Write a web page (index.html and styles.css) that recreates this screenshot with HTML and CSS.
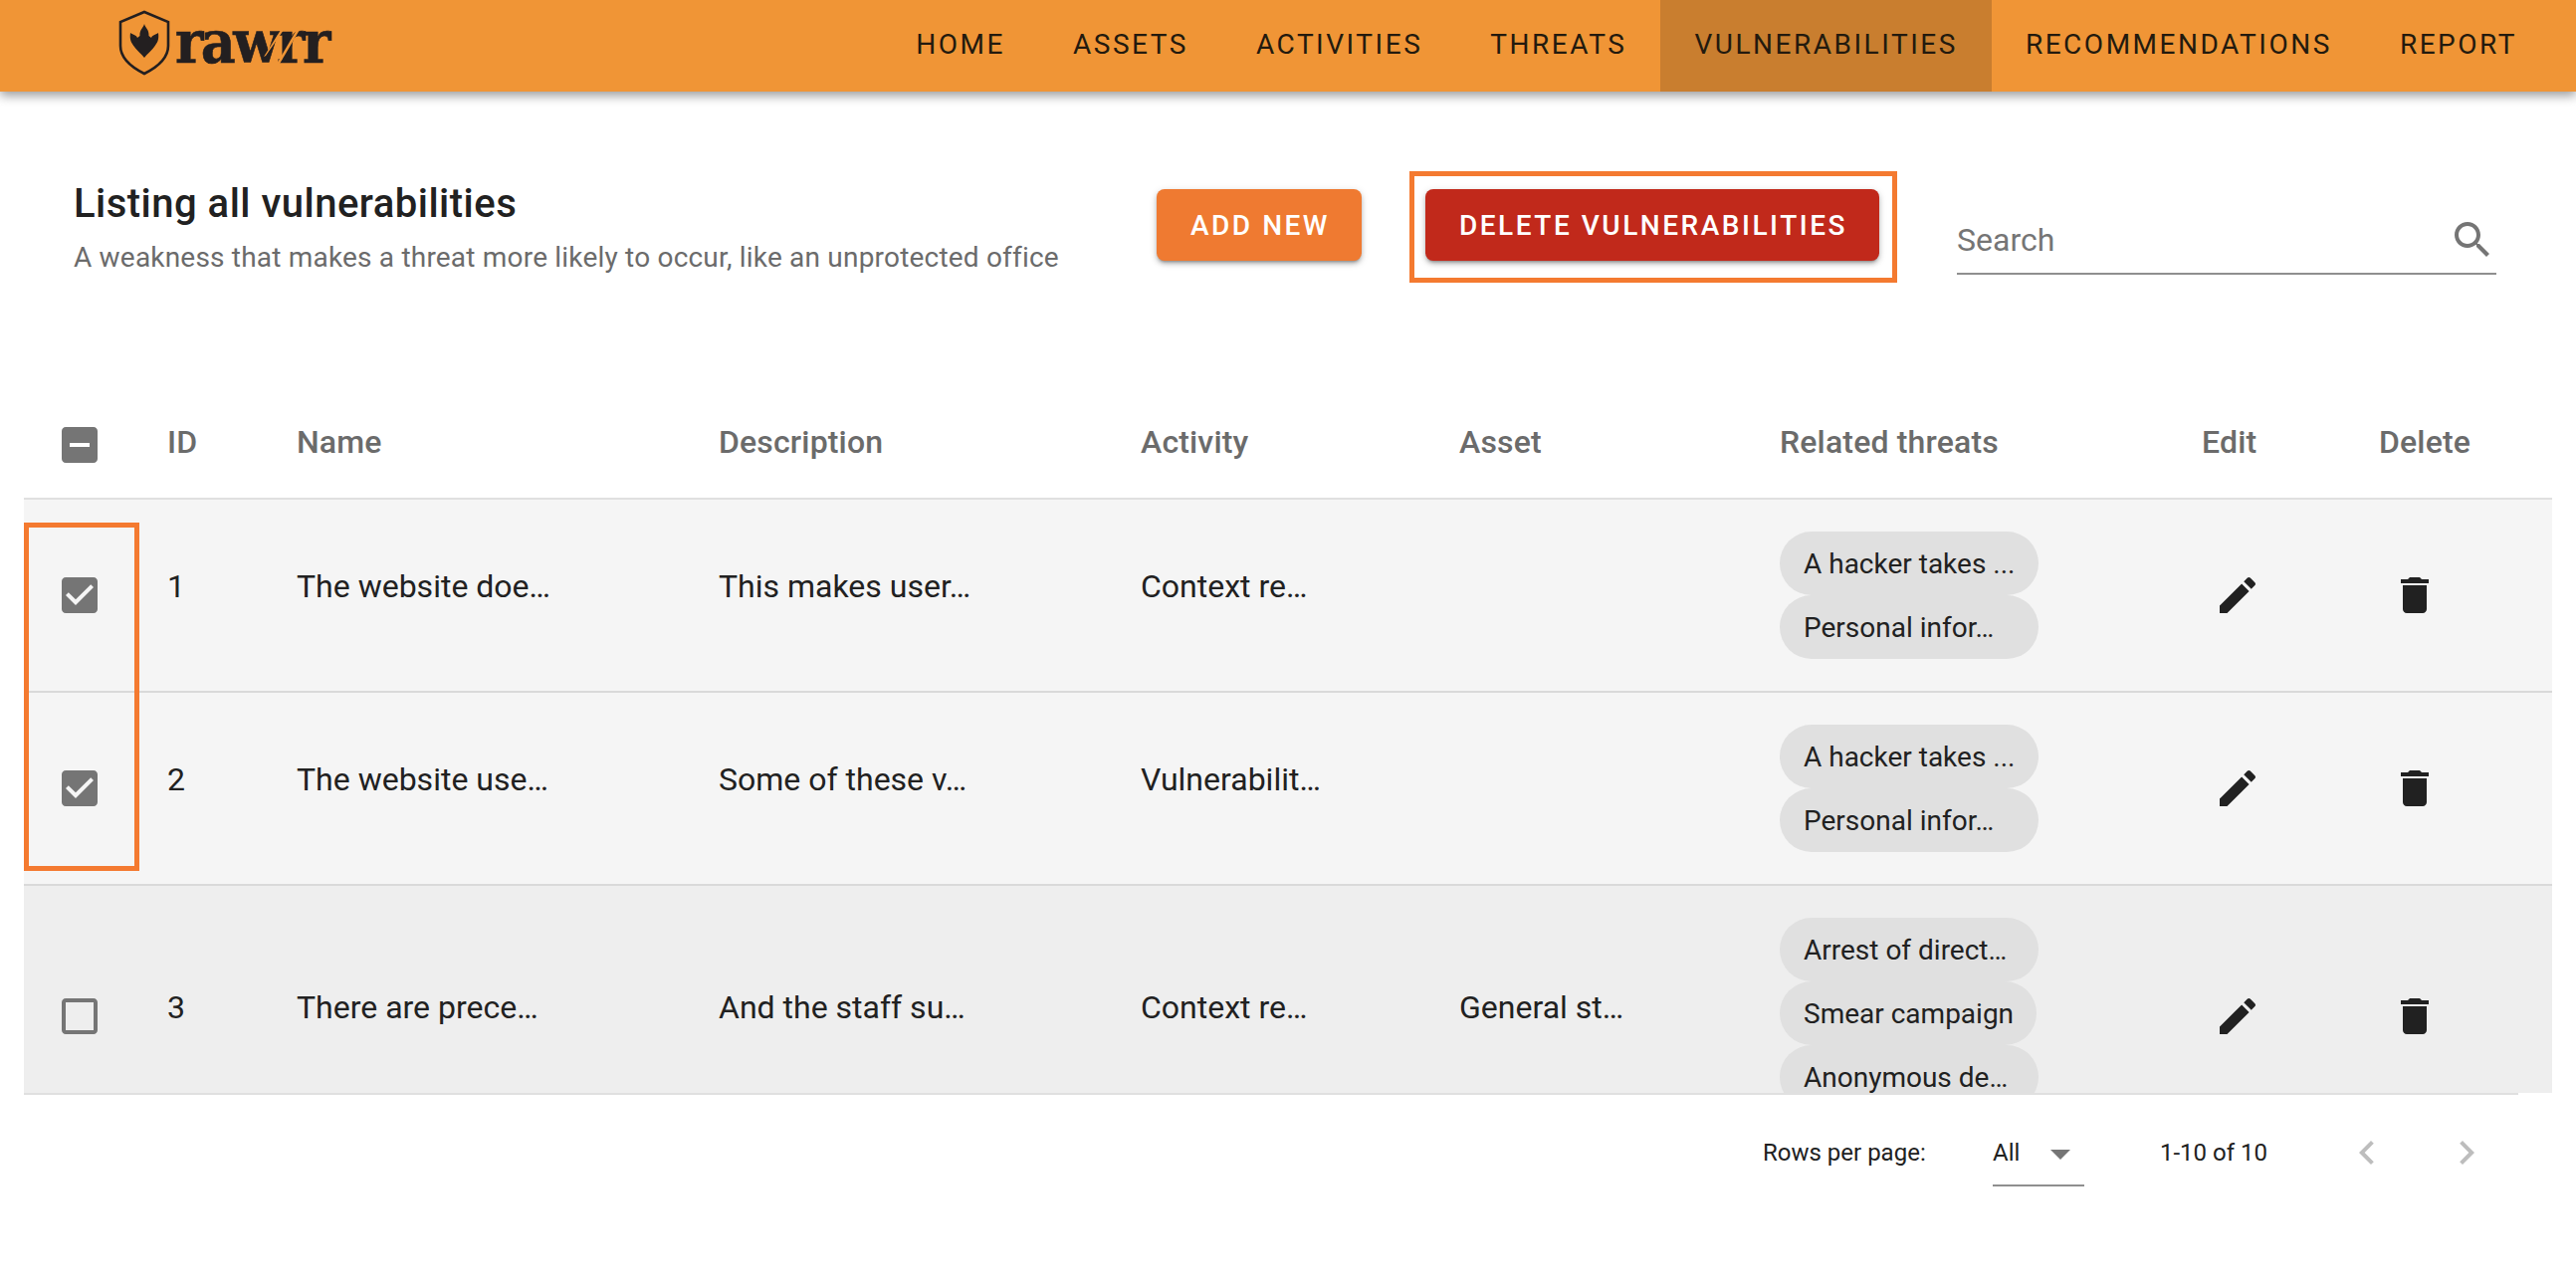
FILE: index.html
```html
<!DOCTYPE html>
<html lang="en">
<head>
<meta charset="utf-8">
<title>rawrr - Vulnerabilities</title>
<link rel="stylesheet" href="styles.css">
</head>
<body>
<svg class="sprite" width="0" height="0" aria-hidden="true">
  <symbol id="i-edit" viewBox="0 0 24 24"><path d="M3 17.25V21h3.75L17.81 9.94l-3.75-3.75L3 17.25zM20.71 7.04c.39-.39.39-1.02 0-1.41l-2.34-2.34c-.39-.39-1.02-.39-1.41 0l-1.83 1.83 3.75 3.75 1.83-1.83z"/></symbol>
  <symbol id="i-delete" viewBox="0 0 24 24"><path d="M6 19c0 1.1.9 2 2 2h8c1.1 0 2-.9 2-2V7H6v12zM19 4h-3.5l-1-1h-5l-1 1H5v2h14V4z"/></symbol>
  <symbol id="i-checked" viewBox="0 0 24 24"><path d="M19 3H5c-1.11 0-2 .9-2 2v14c0 1.1.89 2 2 2h14c1.11 0 2-.9 2-2V5c0-1.1-.89-2-2-2zm-9 14l-5-5 1.41-1.41L10 14.17l7.59-7.59L19 8l-9 9z"/></symbol>
  <symbol id="i-indet" viewBox="0 0 24 24"><path d="M19 3H5c-1.1 0-2 .9-2 2v14c0 1.1.9 2 2 2h14c1.1 0 2-.9 2-2V5c0-1.1-.9-2-2-2zm-2 10H7v-2h10v2z"/></symbol>
  <symbol id="i-box" viewBox="0 0 24 24"><path d="M19 5v14H5V5h14m0-2H5c-1.1 0-2 .9-2 2v14c0 1.1.9 2 2 2h14c1.1 0 2-.9 2-2V5c0-1.1-.9-2-2-2z"/></symbol>
  <symbol id="i-search" viewBox="0 0 24 24"><path d="M15.5 14h-.79l-.28-.27C15.41 12.59 16 11.11 16 9.5 16 5.91 13.09 3 9.5 3S3 5.91 3 9.5 5.91 16 9.5 16c1.61 0 3.09-.59 4.23-1.57l.27.28v.79l5 4.99L20.49 19l-4.99-5zm-6 0C7.01 14 5 11.99 5 9.5S7.01 5 9.5 5 14 7.01 14 9.5 11.99 14 9.5 14z"/></symbol>
  <symbol id="i-prev" viewBox="0 0 24 24"><path d="M15.41 7.41L14 6l-6 6 6 6 1.41-1.41L10.83 12z"/></symbol>
  <symbol id="i-next" viewBox="0 0 24 24"><path d="M10 6L8.59 7.41 13.17 12l-4.58 4.59L10 18l6-6z"/></symbol>
</svg>

<header class="appbar">
  <div class="logo">
    <svg class="logo-shield" viewBox="0 0 52 66" aria-hidden="true">
      <path class="shield-line" d="M26 2 L50 12 V36 C50 50 36 59 26 64 C16 59 2 50 2 36 V12 Z"/>
      <path class="shield-paw" d="M26 14 C27 18 31 20 30.5 26 L33 28 C34 25 37 25 40 23 C41 30 39 33 36 37 C33 41 30 43 26 48 C22 43 19 41 16 37 C13 33 11 30 12 23 C15 25 18 25 19 28 L21.5 26 C21 20 25 18 26 14Z"/>
    </svg>
    <span class="logo-text">rawrr</span>
    <svg class="logo-claw" viewBox="0 0 60 40" aria-hidden="true">
      <path d="M19 0 L22 0 L4 26 L2 27 Z"/>
      <path d="M35 0 L38 0 L18 34 L15 34 Z"/>
    </svg>
  </div>
  <nav class="nav">
    <a class="nav-item">Home</a>
    <a class="nav-item">Assets</a>
    <a class="nav-item">Activities</a>
    <a class="nav-item">Threats</a>
    <a class="nav-item is-active">Vulnerabilities</a>
    <a class="nav-item">Recommendations</a>
    <a class="nav-item">Report</a>
  </nav>
</header>

<main>
  <section class="toolbar">
    <div class="intro">
      <h1 class="intro-title">Listing all vulnerabilities</h1>
      <p class="intro-sub">A weakness that makes a threat more likely to occur, like an unprotected office</p>
    </div>
    <button class="btn btn-add">Add new</button>
    <div class="delete-wrap">
      <button class="btn btn-delete">Delete vulnerabilities</button>
      <span class="callout callout-button"></span>
    </div>
    <div class="search">
      <span class="search-label">Search</span>
      <svg class="icon search-icon"><use href="#i-search"/></svg>
    </div>
  </section>

  <section class="table">
    <div class="row row-head">
      <div class="cell cell-check"><svg class="icon icon-check"><use href="#i-indet"/></svg></div>
      <div class="cell">ID</div>
      <div class="cell">Name</div>
      <div class="cell">Description</div>
      <div class="cell">Activity</div>
      <div class="cell">Asset</div>
      <div class="cell">Related threats</div>
      <div class="cell">Edit</div>
      <div class="cell">Delete</div>
    </div>

    <div class="row row-body is-selected">
      <div class="cell cell-check"><svg class="icon icon-check"><use href="#i-checked"/></svg></div>
      <div class="cell cell-text">1</div>
      <div class="cell cell-text">The website doe…</div>
      <div class="cell cell-text">This makes user…</div>
      <div class="cell cell-text">Context re…</div>
      <div class="cell cell-text"></div>
      <div class="cell cell-chips"><span class="chip">A hacker takes ...</span><span class="chip">Personal infor…</span></div>
      <div class="cell cell-action"><svg class="icon"><use href="#i-edit"/></svg></div>
      <div class="cell cell-action"><svg class="icon"><use href="#i-delete"/></svg></div>
    </div>

    <div class="row row-body is-selected">
      <div class="cell cell-check"><svg class="icon icon-check"><use href="#i-checked"/></svg></div>
      <div class="cell cell-text">2</div>
      <div class="cell cell-text">The website use…</div>
      <div class="cell cell-text">Some of these v…</div>
      <div class="cell cell-text">Vulnerabilit…</div>
      <div class="cell cell-text"></div>
      <div class="cell cell-chips"><span class="chip">A hacker takes ...</span><span class="chip">Personal infor…</span></div>
      <div class="cell cell-action"><svg class="icon"><use href="#i-edit"/></svg></div>
      <div class="cell cell-action"><svg class="icon"><use href="#i-delete"/></svg></div>
    </div>

    <div class="row row-body row-tall">
      <div class="cell cell-check"><svg class="icon icon-check"><use href="#i-box"/></svg></div>
      <div class="cell cell-text">3</div>
      <div class="cell cell-text">There are prece…</div>
      <div class="cell cell-text">And the staff su…</div>
      <div class="cell cell-text">Context re…</div>
      <div class="cell cell-text">General st…</div>
      <div class="cell cell-chips"><span class="chip">Arrest of direct…</span><span class="chip chip-auto">Smear campaign</span><span class="chip">Anonymous de…</span></div>
      <div class="cell cell-action"><svg class="icon"><use href="#i-edit"/></svg></div>
      <div class="cell cell-action"><svg class="icon"><use href="#i-delete"/></svg></div>
    </div>

    <span class="callout callout-rows"></span>
  </section>

  <div class="table-rule"></div>

  <footer class="pager">
    <span class="pager-label">Rows per page:</span>
    <div class="pager-select"><span>All</span><i class="caret"></i></div>
    <span class="pager-count">1-10 of 10</span>
    <svg class="icon pager-arrow pager-prev"><use href="#i-prev"/></svg>
    <svg class="icon pager-arrow pager-next"><use href="#i-next"/></svg>
  </footer>
</main>
</body>
</html>
```

FILE: styles.css
```css
* { box-sizing: border-box; }
html, body { margin: 0; height: 100%; }
body {
  background: #fff;
  color: #212121;
  font-family: Roboto, "Liberation Sans", sans-serif;
  overflow: hidden;
}
.sprite { position: absolute; }
.icon { width: 48px; height: 48px; display: block; flex: none; fill: #212121; }
.icon-check { fill: #757575; }

.appbar {
  height: 92px;
  background: #f09536;
  display: flex;
  align-items: stretch;
  justify-content: space-between;
  box-shadow: 0 4px 10px rgba(0, 0, 0, .4);
  position: relative;
  z-index: 2;
}
.logo {
  position: relative;
  display: flex;
  align-items: center;
  margin-left: 119px;
  width: 220px;
}
.logo-shield { width: 52px; height: 66px; flex: none; margin-top: -6px; }
.shield-line { fill: none; stroke: #231f20; stroke-width: 2.6; }
.shield-paw { fill: #231f20; }
.logo-text {
  font-family: "DejaVu Serif", serif;
  font-stretch: condensed;
  font-weight: 700;
  font-size: 60px;
  letter-spacing: -2.6px;
  line-height: 1;
  color: #231f20;
  -webkit-text-stroke: .6px #231f20;
  margin-left: 5px;
  margin-top: -8px;
}
.logo-claw {
  position: absolute;
  left: 144px;
  top: 30px;
  width: 60px;
  height: 40px;
}
.logo-claw path { fill: #f09536; }

.nav { display: flex; align-items: stretch; margin-right: 25px; }
.nav-item {
  display: flex;
  align-items: center;
  padding: 0 34px 4px;
  font-size: 28px;
  font-weight: 400;
  letter-spacing: .09em;
  text-transform: uppercase;
  color: #231a0e;
}
.nav-item.is-active { background: #c97e2f; }

.toolbar {
  height: 308px;
  padding: 98px 0 0 74px;
  display: flex;
  align-items: flex-start;
}
.intro { width: 1088px; flex: none; }
.intro-title {
  margin: -9px 0 0;
  font-size: 40px;
  font-weight: 500;
  line-height: 48px;
  letter-spacing: .012em;
  color: #212121;
}
.intro-sub {
  margin: 10px 0 0;
  font-size: 28px;
  line-height: 40px;
  letter-spacing: .007em;
  color: #6b6b6b;
}
.btn {
  height: 72px;
  border: 0;
  border-radius: 8px;
  padding: 0 0 0 2px;
  font-family: inherit;
  font-size: 28px;
  font-weight: 500;
  letter-spacing: .09em;
  text-transform: uppercase;
  color: #fff;
  box-shadow: 0 3px 3px -2px rgba(0,0,0,.3), 0 3px 5px rgba(0,0,0,.2), 0 2px 8px rgba(0,0,0,.12);
}
.btn-add { background: #ef7a31; width: 206px; flex: none; }
.btn-delete { background: #c1291b; width: 456px; display: block; }
.delete-wrap { position: relative; margin-left: 64px; flex: none; }
.callout {
  position: absolute;
  border: 5px solid #f47a30;
  pointer-events: none;
}
.callout-button { left: -16px; right: -18px; top: -18px; bottom: -22px; }

.search {
  width: 542px;
  height: 86px;
  margin-left: 78px;
  border-bottom: 2px solid #8f8f8f;
  display: flex;
  align-items: center;
  justify-content: space-between;
  flex: none;
}
.search-label { font-size: 32px; color: #757575; margin-top: 18px; }
.search-icon { fill: #757575; margin: 17px 0 0 0; }

.table {
  position: relative;
  margin: 0 24px;
  height: 698px;
  overflow: hidden;
}
.row {
  display: grid;
  grid-template-columns: 144px 130px 424px 424px 320px 322px 424px 178px 174px;
}
.row-head {
  height: 102px;
  border-bottom: 2px solid #e0e0e0;
  align-items: center;
  font-size: 32px;
  font-weight: 500;
  letter-spacing: .005em;
  color: #6b6b6b;
}
.row-head .cell { padding-bottom: 12px; }
.row-head .cell-check { padding: 0 0 6px 32px; }
.cell-check { padding-left: 32px; }

.row-body {
  height: 194px;
  border-bottom: 2px solid #d9d9d9;
  align-items: center;
  background: #f5f5f5;
  font-size: 32px;
}
.row-tall { height: 264px; background: #eeeeee; }
.cell-text { padding-bottom: 18px; }
.cell-chips {
  display: flex;
  flex-direction: column;
  align-items: flex-start;
  align-self: start;
  padding-top: 32px;
}
.chip {
  width: 260px;
  height: 64px;
  padding: 0 24px;
  border-radius: 32px;
  background: #e0e0e0;
  font-size: 28px;
  line-height: 66px;
  white-space: nowrap;
  overflow: hidden;
}
.chip-auto { width: 258px; }
.cell-action { padding-left: 12px; }

.callout-rows { left: 0; top: 125px; width: 116px; height: 350px; }

.table-rule { width: 2506px; height: 2px; margin-left: 24px; background: #e0e0e0; }

.pager {
  height: 116px;
  display: flex;
  align-items: center;
  padding-left: 1771px;
  font-size: 24px;
  color: #212121;
}
.pager-label { width: 231px; flex: none; }
.pager-select {
  width: 92px;
  height: 68px;
  border-bottom: 2px solid #8f8f8f;
  display: flex;
  align-items: center;
  flex: none;
  position: relative;
  padding-top: 2px;
}
.caret {
  position: absolute;
  left: 58px;
  top: 31px;
  width: 0;
  height: 0;
  border-left: 10px solid transparent;
  border-right: 10px solid transparent;
  border-top: 10px solid #757575;
}
.pager-count { margin-left: 76px; width: 184px; flex: none; }
.pager-arrow { fill: #bdbdbd; }
.pager-next { margin-left: 52px; }
```
